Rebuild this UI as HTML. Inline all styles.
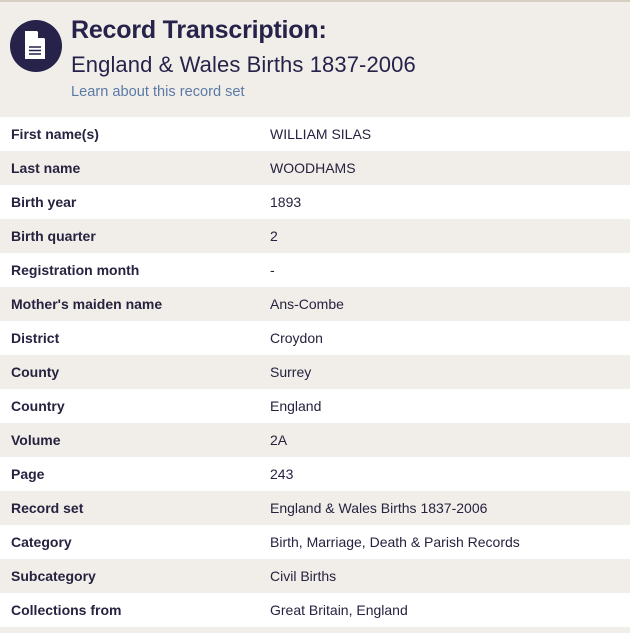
<!DOCTYPE html>
<html><head><style>
body{margin:0;width:630px;height:633px;background:#f1eee9;font-family:"Liberation Sans",sans-serif;color:#26223f;overflow:hidden;position:relative}
.top{position:absolute;top:0;left:0;width:630px;height:2px;background:#d6cfc2}
.icon{position:absolute;left:10px;top:20px;width:52px;height:52px;border-radius:50%;background:#26224a}
h1{position:absolute;left:71px;top:16px;margin:0;font-size:25px;font-weight:bold;color:#26224a;letter-spacing:-0.2px}
h2{position:absolute;left:71px;top:52px;margin:0;font-size:22px;font-weight:normal;color:#26224a;letter-spacing:0.1px}
.lk{position:absolute;left:71px;top:84px;font-size:14.6px;color:#5b7aa6}
table{position:absolute;top:117px;left:0;width:630px;border-collapse:collapse}
td{height:34px;padding:0;font-size:14px}
tr:nth-child(odd){background:#fff}
tr:nth-child(even){background:#f1eee9}
td.a{padding-left:11px;width:259px;font-weight:bold}
</style></head><body>
<div class="top"></div>
<div class="icon"><svg width="52" height="52" viewBox="0 0 52 52"><path d="M15 11h12l8 8v20H15z" fill="#fff"/><path d="M28 11l7 7h-7z" fill="#26224a"/><path d="M19 27h12M19 30.5h12M19 34h12" stroke="#26224a" stroke-width="1.6"/></svg></div>
<h1>Record Transcription:</h1>
<h2>England &amp; Wales Births 1837-2006</h2>
<div class="lk">Learn about this record set</div>
<table>
<tr><td class="a">First name(s)</td><td>WILLIAM SILAS</td></tr>
<tr><td class="a">Last name</td><td>WOODHAMS</td></tr>
<tr><td class="a">Birth year</td><td>1893</td></tr>
<tr><td class="a">Birth quarter</td><td>2</td></tr>
<tr><td class="a">Registration month</td><td>-</td></tr>
<tr><td class="a">Mother's maiden name</td><td>Ans-Combe</td></tr>
<tr><td class="a">District</td><td>Croydon</td></tr>
<tr><td class="a">County</td><td>Surrey</td></tr>
<tr><td class="a">Country</td><td>England</td></tr>
<tr><td class="a">Volume</td><td>2A</td></tr>
<tr><td class="a">Page</td><td>243</td></tr>
<tr><td class="a">Record set</td><td>England &amp; Wales Births 1837-2006</td></tr>
<tr><td class="a">Category</td><td>Birth, Marriage, Death &amp; Parish Records</td></tr>
<tr><td class="a">Subcategory</td><td>Civil Births</td></tr>
<tr><td class="a">Collections from</td><td>Great Britain, England</td></tr>
</table>
</body></html>
